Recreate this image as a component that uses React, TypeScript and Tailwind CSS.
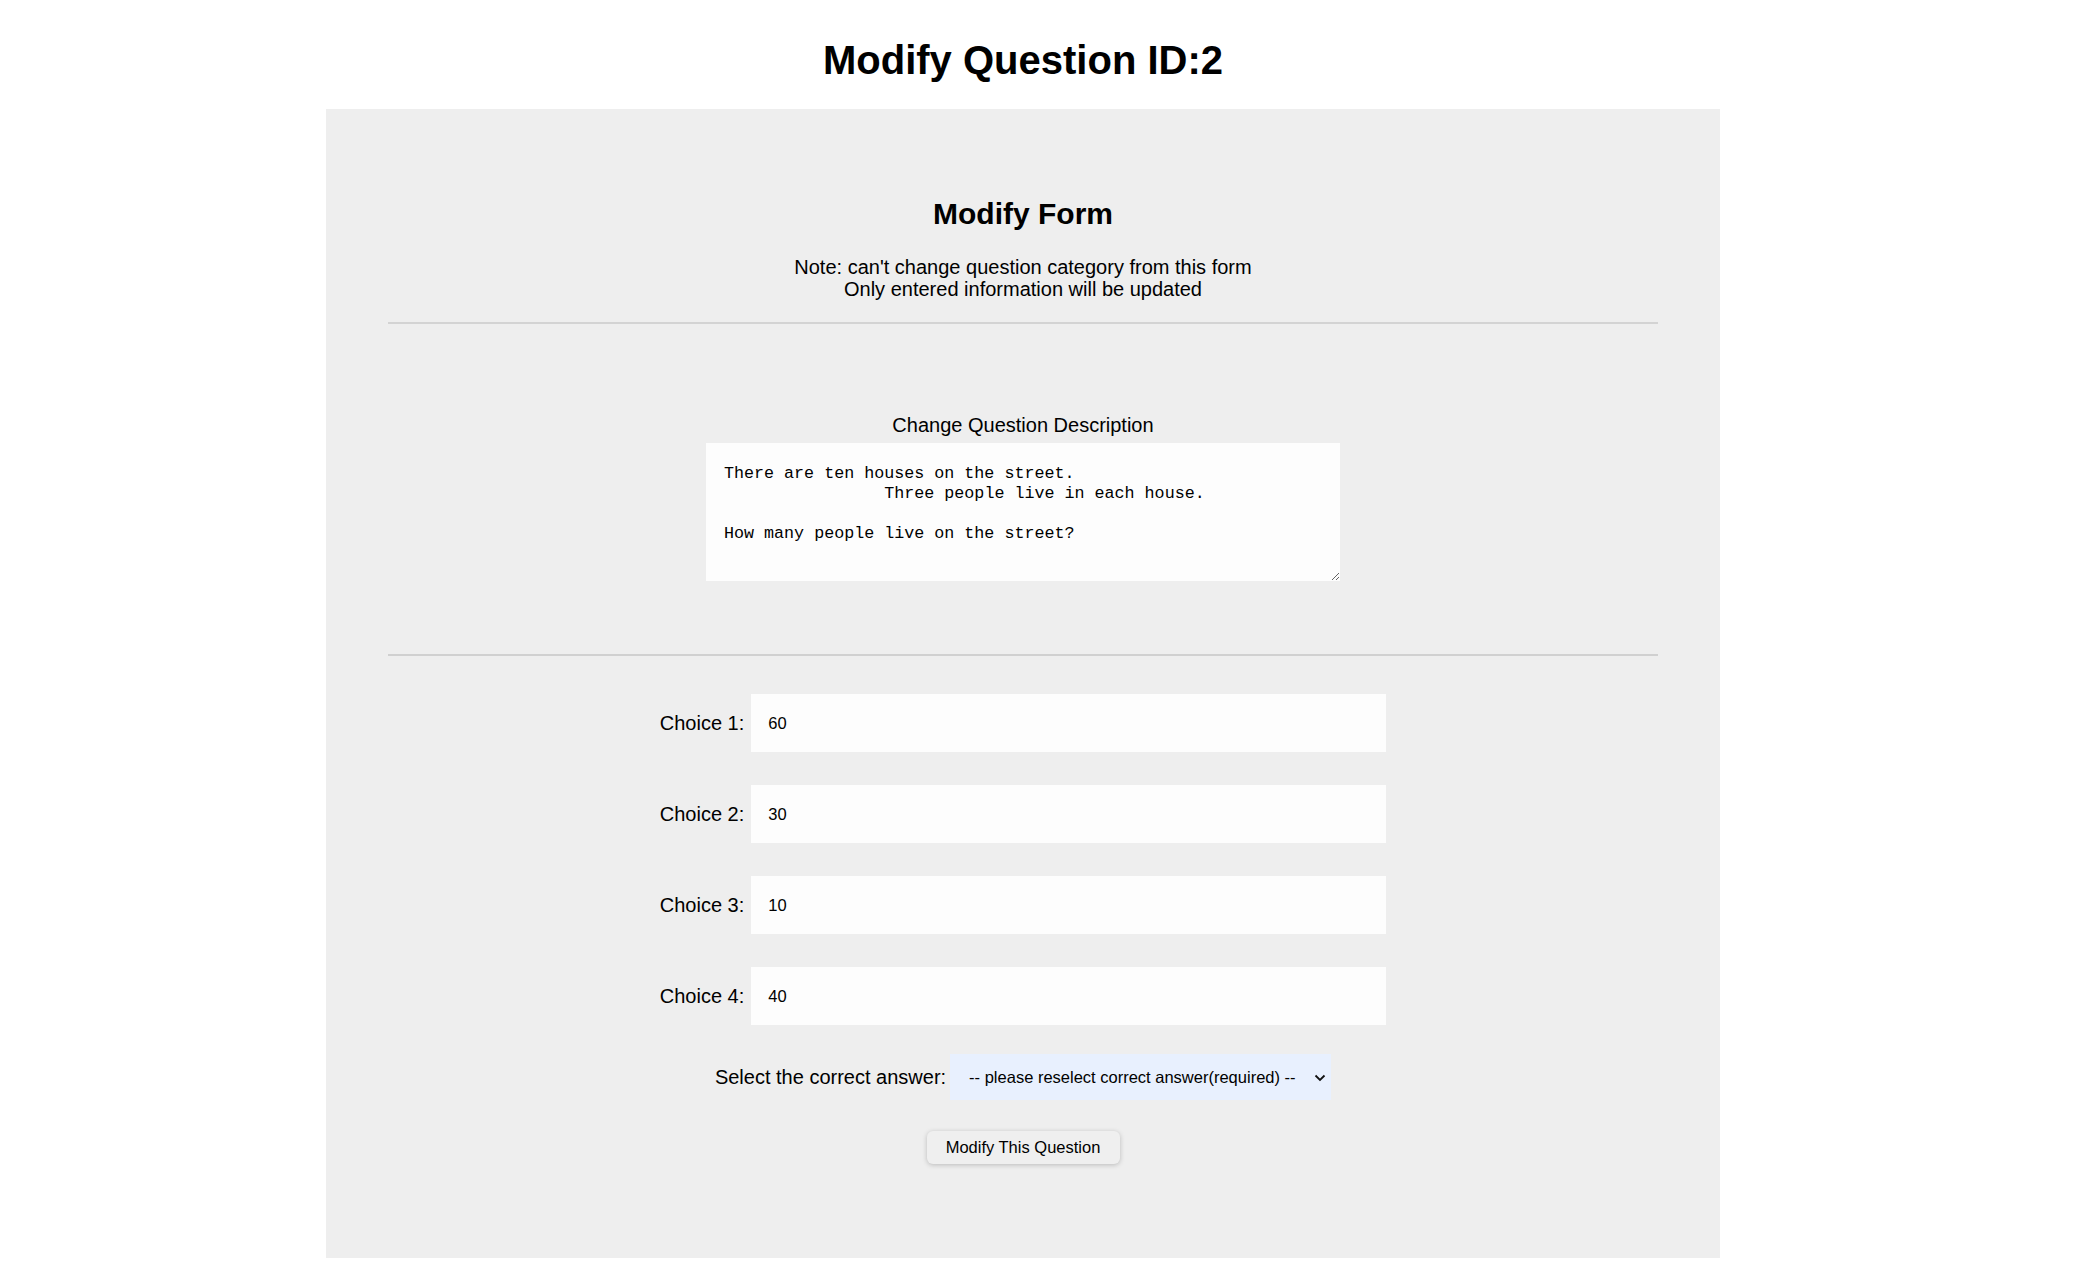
import { useState } from "react";

const choices = ["60", "30", "10", "40"];

const description =
  "There are ten houses on the street.\n                Three people live in each house.\n\nHow many people live on the street?";

function ChoiceRow({ index, value }: { index: number; value: string }) {
  const [val, setVal] = useState(value);
  return (
    <div className="flex items-center justify-center gap-[7px]">
      <label className="text-[20px] leading-[23px]">Choice {index}:</label>
      <input
        type="text"
        value={val}
        onChange={(e) => setVal(e.target.value)}
        className="w-[635px] h-[58px] bg-[#fdfdfd] pl-[17px] text-[16.5px] outline-none"
      />
    </div>
  );
}

export default function App() {
  return (
    <div className="min-h-[1282px] bg-white text-black font-['Liberation_Sans',Arial,sans-serif]">
      <div className="w-[2046px] pt-[37px]">
        <h1 className="text-center text-[40px] leading-[46px] font-bold mb-[26px]">
          Modify Question ID:2
        </h1>

        <div className="mx-auto w-[1394px] h-[1149px] bg-[#eeeeee] px-[62px] pt-[88px]">
          <h2 className="text-center text-[30px] leading-[34px] font-bold">Modify Form</h2>
          <p className="mt-[25px] text-center text-[20px] leading-[22px]">
            Note: can't change question category from this form
            <br />
            Only entered information will be updated
          </p>

          <div className="mt-[22px] border-t-2 border-[#d3d3d3]" />

          <div className="mt-[90px] flex flex-col items-center">
            <label className="text-[20px] leading-[23px]">Change Question Description</label>
            <textarea
              defaultValue={description}
              className="mt-[6px] w-[634px] h-[138px] bg-[#fdfdfd] pl-[18px] pr-[18px] pt-[21px] font-['Liberation_Mono','Courier_New',monospace] text-[16.7px] leading-[20px] outline-none"
            />
          </div>

          <div className="mt-[73px] border-t-2 border-[#d0d0d0]" />

          <div className="mt-[38px] flex flex-col gap-[33px]">
            {choices.map((c, i) => (
              <ChoiceRow key={i} index={i + 1} value={c} />
            ))}
          </div>

          <div className="mt-[29px] flex items-center justify-center gap-[4px]">
            <label className="text-[20px] leading-[23px]">Select the correct answer:</label>
            <div className="relative">
              <select
                defaultValue=""
                className="appearance-none w-[381px] h-[46px] bg-[#e8f0fe] pl-[19px] text-[16.5px] outline-none"
              >
                <option value="">-- please reselect correct answer(required) --</option>
                <option value="1">60</option>
                <option value="2">30</option>
                <option value="3">10</option>
                <option value="4">40</option>
              </select>
              <svg
                className="absolute right-[5px] top-[20px] pointer-events-none"
                width="12"
                height="8"
                viewBox="0 0 12 8"
                fill="none"
              >
                <path d="M1.5 1.5 6 6l4.5-4.5" stroke="#111" strokeWidth="1.8" />
              </svg>
            </div>
          </div>

          <div className="mt-[31px] flex justify-center">
            <button className="w-[193px] h-[33px] rounded-[6px] bg-[#efefef] text-[16.5px] shadow-[0_1px_5px_rgba(0,0,0,0.22)]">
              Modify This Question
            </button>
          </div>
        </div>
      </div>
    </div>
  );
}
